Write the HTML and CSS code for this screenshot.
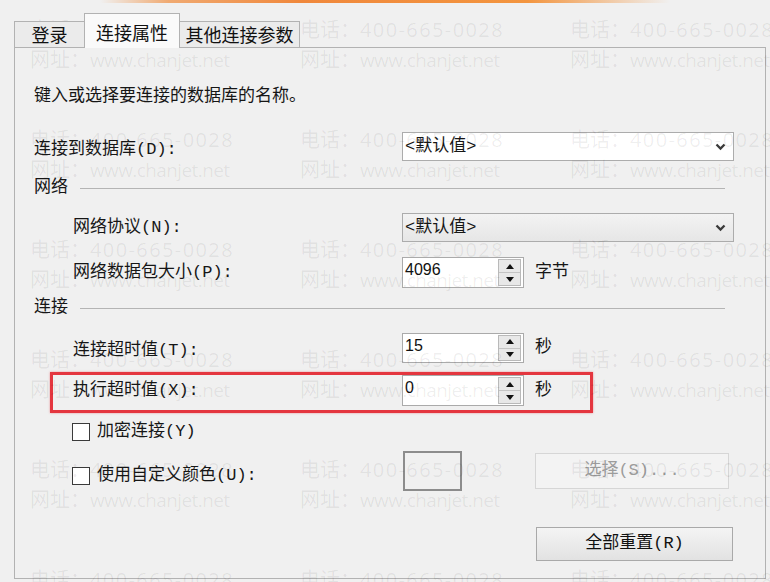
FILE: index.html
```html
<!DOCTYPE html>
<html lang="zh-CN">
<head>
<meta charset="utf-8">
<title>连接属性</title>
<link rel="stylesheet" href="styles.css">
</head>
<body>
<div class="topbar"></div>
<div class="dialog">
  <div class="tabs">
    <div class="tab t1">登录</div>
    <div class="tab t2 active">连接属性</div>
    <div class="tab t3">其他连接参数</div>
  </div>
  <div class="panel">
    <div class="desc">键入或选择要连接的数据库的名称。</div>

    <div class="row r-db">
      <div class="lbl low">连接到数据库(D):</div>
      <div class="combo white">
        <span class="ctext">&lt;默认值&gt;</span>
        <svg class="chev" width="11" height="8" viewBox="0 0 11 8"><polyline points="1.5,1.5 5.5,5.5 9.5,1.5" fill="none" stroke="#3a3a3a" stroke-width="2.3"/></svg>
      </div>
    </div>

    <div class="sect s1"><span>网络</span><div class="rule"></div></div>

    <div class="row r-proto">
      <div class="lbl ind">网络协议(N):</div>
      <div class="combo gray">
        <span class="ctext">&lt;默认值&gt;</span>
        <svg class="chev" width="11" height="8" viewBox="0 0 11 8"><polyline points="1.5,1.5 5.5,5.5 9.5,1.5" fill="none" stroke="#3a3a3a" stroke-width="2.3"/></svg>
      </div>
    </div>

    <div class="row r-pkt">
      <div class="lbl ind">网络数据包大小(P):</div>
      <div class="spin">
        <span class="val">4096</span>
        <div class="spinbtns">
          <div class="sb"><svg width="8" height="5" viewBox="0 0 8 5"><polygon points="4,0 8,5 0,5" fill="#111"/></svg></div>
          <div class="sb"><svg width="8" height="5" viewBox="0 0 8 5"><polygon points="0,0 8,0 4,5" fill="#111"/></svg></div>
        </div>
      </div>
      <span class="unit">字节</span>
    </div>

    <div class="sect s2"><span>连接</span><div class="rule"></div></div>

    <div class="row r-cto">
      <div class="lbl ind low">连接超时值(T):</div>
      <div class="spin">
        <span class="val">15</span>
        <div class="spinbtns">
          <div class="sb"><svg width="8" height="5" viewBox="0 0 8 5"><polygon points="4,0 8,5 0,5" fill="#111"/></svg></div>
          <div class="sb"><svg width="8" height="5" viewBox="0 0 8 5"><polygon points="0,0 8,0 4,5" fill="#111"/></svg></div>
        </div>
      </div>
      <span class="unit">秒</span>
    </div>

    <div class="row r-exec">
      <div class="lbl ind">执行超时值(X):</div>
      <div class="spin">
        <span class="val">0</span>
        <div class="spinbtns">
          <div class="sb"><svg width="8" height="5" viewBox="0 0 8 5"><polygon points="4,0 8,5 0,5" fill="#111"/></svg></div>
          <div class="sb"><svg width="8" height="5" viewBox="0 0 8 5"><polygon points="0,0 8,0 4,5" fill="#111"/></svg></div>
        </div>
      </div>
      <span class="unit">秒</span>
      <div class="redbox"></div>
    </div>

    <div class="row r-enc">
      <div class="cb"></div><span class="cbl">加密连接(Y)</span>
    </div>

    <div class="row r-color">
      <div class="cbgroup"><div class="cb"></div><span class="cbl">使用自定义颜色(U):</span></div>
      <div class="swatch"></div>
      <div class="btn disabled">选择(S)...</div>
    </div>

    <div class="row r-reset">
      <div class="btn reset">全部重置(R)</div>
    </div>
  </div>
</div>

<div class="wm">
  <div class="wc"><div>电话：<span class="ph">400-665-0028</span></div><div>网址：<span class="url">www.chanjet.net</span></div></div>
  <div class="wc"><div>电话：<span class="ph">400-665-0028</span></div><div>网址：<span class="url">www.chanjet.net</span></div></div>
  <div class="wc"><div>电话：<span class="ph">400-665-0028</span></div><div>网址：<span class="url">www.chanjet.net</span></div></div>
  <div class="wc"><div>电话：<span class="ph">400-665-0028</span></div><div>网址：<span class="url">www.chanjet.net</span></div></div>
  <div class="wc"><div>电话：<span class="ph">400-665-0028</span></div><div>网址：<span class="url">www.chanjet.net</span></div></div>
  <div class="wc"><div>电话：<span class="ph">400-665-0028</span></div><div>网址：<span class="url">www.chanjet.net</span></div></div>
  <div class="wc"><div>电话：<span class="ph">400-665-0028</span></div><div>网址：<span class="url">www.chanjet.net</span></div></div>
  <div class="wc"><div>电话：<span class="ph">400-665-0028</span></div><div>网址：<span class="url">www.chanjet.net</span></div></div>
  <div class="wc"><div>电话：<span class="ph">400-665-0028</span></div><div>网址：<span class="url">www.chanjet.net</span></div></div>
  <div class="wc"><div>电话：<span class="ph">400-665-0028</span></div><div>网址：<span class="url">www.chanjet.net</span></div></div>
  <div class="wc"><div>电话：<span class="ph">400-665-0028</span></div><div>网址：<span class="url">www.chanjet.net</span></div></div>
  <div class="wc"><div>电话：<span class="ph">400-665-0028</span></div><div>网址：<span class="url">www.chanjet.net</span></div></div>
  <div class="wc"><div>电话：<span class="ph">400-665-0028</span></div><div>网址：<span class="url">www.chanjet.net</span></div></div>
  <div class="wc"><div>电话：<span class="ph">400-665-0028</span></div><div>网址：<span class="url">www.chanjet.net</span></div></div>
  <div class="wc"><div>电话：<span class="ph">400-665-0028</span></div><div>网址：<span class="url">www.chanjet.net</span></div></div>
  <div class="wc"><div>电话：<span class="ph">400-665-0028</span></div><div>网址：<span class="url">www.chanjet.net</span></div></div>
  <div class="wc"><div>电话：<span class="ph">400-665-0028</span></div><div>网址：<span class="url">www.chanjet.net</span></div></div>
  <div class="wc"><div>电话：<span class="ph">400-665-0028</span></div><div>网址：<span class="url">www.chanjet.net</span></div></div>
</div>
</body>
</html>
```
FILE: styles.css
```css
html, body {
  margin: 0;
  padding: 0;
}
body {
  width: 770px;
  height: 582px;
  overflow: hidden;
  position: relative;
  background: #f0f0f0;
  color: #161616;
  font-family: "Liberation Mono", "Noto Sans CJK SC", monospace;
  font-size: 17px;
  line-height: 24px;
}

.topbar {
  height: 3px;
  margin: 0 100px;
  background: linear-gradient(90deg, rgba(240,140,60,0) 0%, rgba(240,140,60,0.7) 12%, #f0883c 35%, #f3953f 75%, rgba(240,150,70,0) 100%);
}

.dialog {
  padding: 10px 0 0 14px;
}

.tabs {
  display: flex;
  align-items: flex-end;
  height: 35px;
  margin-bottom: -1px;
  position: relative;
  z-index: 1;
}
.tab {
  box-sizing: border-box;
  height: 26px;
  margin-bottom: 1px;
  border: 1px solid #b2b2b2;
  border-bottom: none;
  background: #ebebeb;
  display: flex;
  align-items: flex-end;
  justify-content: center;
  padding-bottom: 1px;
  font-family: "Noto Sans CJK SC", sans-serif;
  font-size: 18px;
  line-height: 24px;
  color: #111;
}
.t1 { width: 71px; }
.t2 { width: 96px; margin-left: -1px; }
.t3 { width: 121px; margin-left: -1px; }
.tab.active {
  height: 35px;
  margin-bottom: 0;
  background: #fafafa;
  padding-bottom: 4px;
  position: relative;
  z-index: 2;
}

.panel {
  box-sizing: border-box;
  width: 752px;
  height: 532px;
  border: 1px solid #b2b2b2;
  padding: 37px 0 0 19px;
}

.desc {
  height: 24px;
}

.row {
  display: flex;
  align-items: center;
}
.lbl {
  width: 368px;
  flex: none;
}
.lbl.ind {
  width: 329px;
  margin-left: 39px;
}
.lbl.low {
  padding-top: 6px;
}

.r-db { margin-top: 23px; height: 29px; }
.s1 { margin-top: 17px; }
.r-proto { margin-top: 15px; height: 29px; }
.r-pkt { margin-top: 15px; height: 31px; }
.s2 { margin-top: 10px; }
.r-cto { margin-top: 15px; height: 30px; }
.r-exec { margin-top: 12px; height: 31px; position: relative; }
.r-enc { margin-top: 17px; height: 18px; }
.r-color { margin-top: 10px; height: 40px; }
.r-reset { margin-top: 36px; height: 34px; }

.sect {
  display: flex;
  align-items: center;
  height: 20px;
}
.rule {
  width: 645px;
  height: 1px;
  margin-left: 12px;
  background: #b4b4b4;
}

.combo {
  box-sizing: border-box;
  width: 332px;
  height: 100%;
  border: 1px solid #acacac;
  display: flex;
  align-items: center;
  justify-content: space-between;
  padding: 0 7px 0 2px;
}
.combo.white { background: #ffffff; }
.combo.gray { background: linear-gradient(#f3f3f3, #e6e6e6); }
.ctext { line-height: 24px; }
.chev { display: block; }

.spin {
  box-sizing: border-box;
  width: 122px;
  height: 100%;
  border: 1px solid #aaaaaa;
  background: #ffffff;
  display: flex;
}
.val {
  flex: 1;
  font-family: "Liberation Sans", sans-serif;
  font-size: 16px;
  line-height: 18px;
  padding: 3px 0 0 2px;
  color: #111;
}
.spinbtns {
  box-sizing: border-box;
  width: 23px;
  margin: 1px 2px 1px 0;
  border: 1px solid #b9b9b9;
  background: #e8e8e8;
  display: flex;
  flex-direction: column;
}
.sb {
  flex: 1;
  display: flex;
  align-items: center;
  justify-content: center;
}
.sb + .sb { border-top: 1px solid #c4c4c4; }
.sb svg { display: block; }

.unit {
  margin-left: 11px;
}

.redbox {
  position: absolute;
  left: 16px;
  top: -3px;
  width: 543px;
  height: 41px;
  box-sizing: border-box;
  border: 3px solid #e4363f;
  box-shadow: 0 0 2px rgba(228,54,63,0.5);
  pointer-events: none;
}

.cb {
  box-sizing: border-box;
  width: 18px;
  height: 18px;
  margin-left: 38px;
  border: 1px solid #3a3a3a;
  background: #ffffff;
  flex: none;
}
.cbl {
  margin-left: 7px;
}
.cbgroup {
  width: 368px;
  flex: none;
  display: flex;
  align-items: center;
  padding-top: 9px;
}

.swatch {
  box-sizing: border-box;
  width: 59px;
  height: 40px;
  margin-left: 1px;
  border: 2px solid #8c8c8c;
}

.btn {
  box-sizing: border-box;
  display: flex;
  align-items: center;
  justify-content: center;
}
.btn.disabled {
  width: 194px;
  height: 36px;
  margin-left: 73px;
  border: 1px solid #d6d6d6;
  background: #f3f3f3;
  color: #9c9c9c;
}
.btn.reset {
  width: 197px;
  height: 34px;
  margin-left: 502px;
  border: 1px solid #a9a9a9;
  background: linear-gradient(#f4f4f4, #e2e2e2);
  color: #111;
}

.wm {
  position: absolute;
  left: 30px;
  top: 15px;
  display: grid;
  grid-template-columns: repeat(3, 270px);
  grid-auto-rows: 110px;
  pointer-events: none;
  color: rgba(0,0,0,0.07);
  font-family: "Open Sans", "Noto Sans CJK SC", sans-serif;
  font-size: 20px;
  line-height: 30px;
  white-space: nowrap;
}
.ph { letter-spacing: 1.4px; }
.url { letter-spacing: -0.6px; font-size: 19px; }
```
